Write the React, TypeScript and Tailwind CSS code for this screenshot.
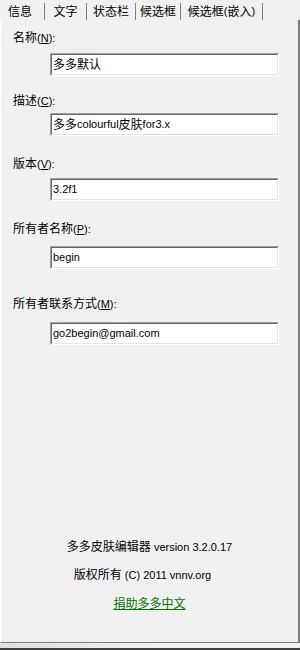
import React from 'react';

const font = { fontFamily: '"Liberation Sans", "Noto Sans CJK SC", sans-serif' };

const tabs = [
    { label: '信息', w: 'w-[45px]', active: true },
    { label: '文字', w: 'w-[42px]' },
    { label: '状态栏', w: 'w-[49px]' },
    { label: '候选框', w: 'w-[45px]' },
    { label: '候选框(嵌入)', w: 'w-[82px]' },
];

// latin runs are a touch smaller than the CJK glyphs, as in the original dialog font
function Mixed({ text }: { text: string }) {
    const parts = text.match(/[\x00-\x7f]+|[^\x00-\x7f]+/g) || [];
    return (
        <>
            {parts.map((p, i) =>
                /^[\x00-\x7f]/.test(p) ? (
                    <span key={i} className="text-[11px] whitespace-pre">{p}</span>
                ) : (
                    <span key={i} className="text-[12px]">{p}</span>
                )
            )}
        </>
    );
}

function Field({ value }: { value: string }) {
    return (
        <div className="ml-[49px] w-[229px] h-[23px] border-t border-l border-[#a0a0a0] border-b border-r border-b-white border-r-white">
            <div className="h-full bg-white border-t border-l border-[#696969] border-b border-r border-b-[#e3e3e3] border-r-[#e3e3e3] flex items-center pl-[1px] text-black leading-none">
                <Mixed text={value} />
            </div>
        </div>
    );
}

function Label({ text, mn, className }: { text: string; mn: string; className: string }) {
    return (
        <div className={`ml-[12px] h-[16px] flex items-center text-[12px] text-black ${className}`}>
            {text}
            <span className="text-[11px]">(<span className="underline">{mn}</span>):</span>
        </div>
    );
}

export default function App() {
    return (
        <div className="w-[300px] h-[650px] bg-[#f0f0f0] flex flex-col overflow-hidden" style={font}>
            <div className="flex h-[20px] shrink-0">
                {tabs.map((t) => (
                    <div key={t.label} className={`${t.w} h-[17px] mt-[3px] flex items-center justify-center border-r border-[#808080] ${t.active ? 'text-[13px] pr-[4px]' : 'text-[12px]'}`}>
                        <Mixed text={t.label} />
                    </div>
                ))}
            </div>

            <div className="h-[623px] shrink-0 flex flex-col border-l border-l-white border-r-2 border-r-[#7a7a7a] border-b border-b-[#808080]">
                <Label text="名称" mn="N" className="mt-[10px]" />
                <div className="mt-[7px]"><Field value="多多默认" /></div>

                <Label text="描述" mn="C" className="mt-[17px]" />
                <div className="mt-[4px]"><Field value="多多colourful皮肤for3.x" /></div>

                <Label text="版本" mn="V" className="mt-[20px]" />
                <div className="mt-[6px]"><Field value="3.2f1" /></div>

                <Label text="所有者名称" mn="P" className="mt-[20px]" />
                <div className="mt-[9px]"><Field value="begin" /></div>

                <Label text="所有者联系方式" mn="M" className="mt-[27px]" />
                <div className="mt-[10px]"><Field value="go2begin@gmail.com" /></div>

                <div className="mt-auto mb-[30px] flex flex-col items-center text-black">
                    <div className="h-[16px] flex items-center"><Mixed text="多多皮肤编辑器 version 3.2.0.17" /></div>
                    <div className="h-[16px] mt-[12px] flex items-center pr-[14px]"><Mixed text="版权所有 (C) 2011 vnnv.org" /></div>
                    <a className="h-[16px] mt-[13px] flex items-center text-[12px] text-[#007000] underline">捐助多多中文</a>
                </div>
            </div>

            <div className="flex-1 bg-gradient-to-r from-[#e0e0e0] via-[#f0f0f0] to-[#f0f0f0] border-b-2 border-b-[#404040]"></div>
        </div>
    );
}
